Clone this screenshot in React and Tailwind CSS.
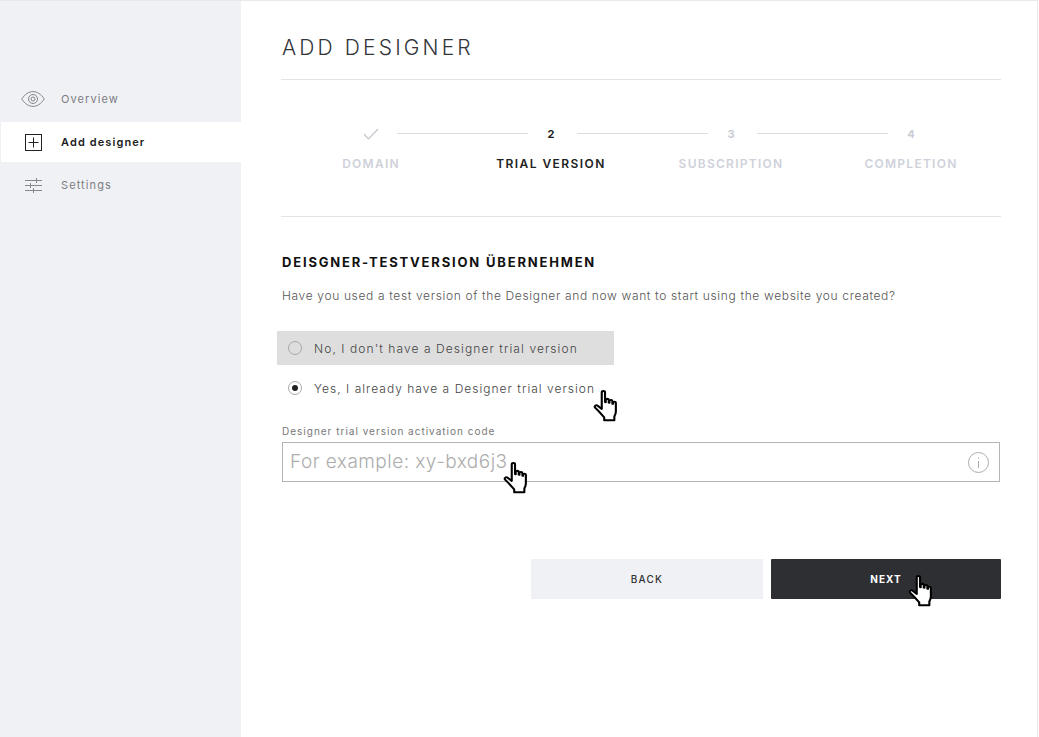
import React from "react";

const font = { fontFamily: '"Inter", "Liberation Sans", sans-serif' };

const Hand = ({ className }) => (
  <svg className={className} width="28" height="34" viewBox="0 0 24 32" preserveAspectRatio="none">
    <path
      d="M7.500 2.200c0-1.600 2.800-1.600 2.800 0v9.200l.6.100V9.300c0-1.400 2.600-1.400 2.600 0v2.600l.6.100v-1.600c0-1.400 2.500-1.400 2.500 0V13l.6.100v-1c0-1.300 2.400-1.300 2.400 0v8.200c0 2-.6 3.300-1.300 4.600v3.600H9.600v-2.800c-1.400-1.600-3-3.600-4.600-5.600L1.800 16.600c-1-1.400.8-3 2.200-1.800l3.500 3z"
      fill="#fff"
      stroke="#000"
      strokeWidth="1.800"
      strokeLinejoin="round"
    />
  </svg>
);

const Eye = () => (
  <svg width="24" height="16" viewBox="0 0 24 16" fill="none" stroke="#85858b" strokeWidth="1">
    <path d="M.7 8C4 3 8 .6 12 .6S20 3 23.300 8C20 13 16 15.400 12 15.400S4 13 .7 8z" />
    <circle cx="12" cy="8" r="4.500" />
    <circle cx="12" cy="8" r="2" />
  </svg>
);

const PlusBox = () => (
  <svg width="17" height="17" viewBox="0 0 17 17" fill="none" stroke="#222">
    <rect x=".5" y=".5" width="16" height="16" />
    <path d="M3.500 8.500h10M8.500 3.500v10" />
  </svg>
);

const Sliders = () => (
  <svg width="17" height="15" viewBox="0 0 17 15" fill="none" stroke="#85858b">
    <path d="M0 2.500h17M0 7.500h17M0 12.500h17M11.500 0v5M5.500 5v5M8.500 10v5" />
  </svg>
);

const navItems = [
  { label: "Overview", icon: <Eye /> },
  { label: "Add designer", icon: <PlusBox />, active: true },
  { label: "Settings", icon: <Sliders /> },
];

const steps = [
  { mark: "check", label: "DOMAIN" },
  { mark: "2", label: "TRIAL VERSION", active: true },
  { mark: "3", label: "SUBSCRIPTION" },
  { mark: "4", label: "COMPLETION" },
];

const Radio = ({ checked }) => (
  <span className="flex h-[14px] w-[14px] shrink-0 items-center justify-center rounded-full border border-[#a9a9a9]">
    {checked && <span className="h-[6px] w-[6px] rounded-full bg-[#222]" />}
  </span>
);

export default function App() {
  return (
    <div className="flex h-[737px] w-[1038px] overflow-hidden border-r border-t border-[#e9e9ec] bg-white" style={font}>
      <aside className="h-full w-[241px] shrink-0 bg-[#f0f1f5] pl-px pt-[78px]">
        {navItems.map((item) => (
          <div key={item.label} className={`mb-[3px] flex h-10 items-center ${item.active ? "bg-white" : ""}`}>
            <span className="flex w-[60px] shrink-0 justify-center pl-[4px]">{item.icon}</span>
            <span
              className={`text-[11px] tracking-[0.1em] ${item.active ? "font-semibold text-[#1c1c1c]" : "text-[#7d7d83]"}`}
            >
              {item.label}
            </span>
          </div>
        ))}
      </aside>

      <main className="flex-1 pl-10 pr-9">
        <h1 className="flex h-[79px] items-center border-b border-[#e4e4e8] pl-px pt-[15px] text-[21px] font-light tracking-[0.15em] text-[#33353a]">
          ADD DESIGNER
        </h1>

        <div className="grid h-[137px] grid-cols-4 border-b border-[#e4e4e8] pt-[45px]">
          {steps.map((step, i) => (
            <div key={step.label} className="relative flex flex-col items-center">
              <div className="flex h-[18px] items-center">
                {step.mark === "check" ? (
                  <svg width="16" height="12" viewBox="0 0 16 12" fill="none" stroke="#c4c6ce" strokeWidth="1.200">
                    <path d="M1 6l4.500 4.800L15 1" />
                  </svg>
                ) : (
                  <span className={`text-[11px] font-bold ${step.active ? "text-[#1c1c1c]" : "text-[#c9ccd5]"}`}>
                    {step.mark}
                  </span>
                )}
              </div>
              {i < 3 && <span className="absolute left-[116px] right-[-67px] top-[8px] h-px bg-[#dcdde3]" />}
              <span
                className={`mt-[12px] whitespace-nowrap text-[12px] font-semibold ${step.active ? "tracking-[0.12em] text-[#222]" : "tracking-[0.105em] text-[#cfd1da]"}`}
              >
                {step.label}
              </span>
            </div>
          ))}
        </div>

        <h2 className="mt-[37px] pl-px text-[13px] font-bold leading-4 tracking-[0.14em] text-[#111]">
          DEISGNER-TESTVERSION ÜBERNEHMEN
        </h2>
        <p className="mt-[18px] pl-px text-[12px] font-light leading-4 tracking-[0.054em] text-[#555]">
          Have you used a test version of the Designer and now want to start using the website you created?
        </p>

        <div className="-ml-1 mt-[27px] flex h-[34px] w-[337px] items-center gap-[12px] bg-[#dedede] pl-[11px]">
          <Radio />
          <span className="pt-px text-[12px] font-light tracking-[0.09em] text-[#444]">
            No, I don't have a Designer trial version
          </span>
        </div>
        <div className="relative -ml-1 mt-[6px] flex h-[34px] items-center gap-[12px] pl-[11px]">
          <Radio checked />
          <span className="pt-px text-[12px] font-light tracking-[0.085em] text-[#444]">
            Yes, I already have a Designer trial version
          </span>
          <Hand className="absolute left-[316px] top-[19px]" />
        </div>

        <label className="mt-5 block pl-px text-[10px] leading-3 tracking-[0.1em] text-[#777]">
          Designer trial version activation code
        </label>
        <div className="relative ml-px mt-[5px] flex h-10 w-[718px] items-center justify-between border border-[#b5b5b5] pl-[7px] pr-[10px]">
          <span className="pt-px text-[19px] font-light tracking-[0.025em] text-[#adadad]">For example: xy-bxd6j3</span>
          <svg width="21" height="21" viewBox="0 0 21 21" fill="none" stroke="#ababab">
            <circle cx="10.500" cy="10.500" r="10" />
            <path d="M10.500 9v7M10.500 5.500v1.200" />
          </svg>
          <Hand className="absolute left-[220px] top-[19px]" />
        </div>

        <div className="mt-[77px] flex justify-end gap-2">
          <button className="h-10 w-[232px] bg-[#f0f1f5] text-[10px] font-medium tracking-[0.12em] text-[#333]">
            BACK
          </button>
          <button className="relative h-10 w-[230px] rounded-[1px] bg-[#2e2f33] text-[10px] font-bold tracking-[0.1em] text-white">
            NEXT
            <Hand className="absolute left-[137px] top-[16px]" />
          </button>
        </div>
      </main>
    </div>
  );
}
